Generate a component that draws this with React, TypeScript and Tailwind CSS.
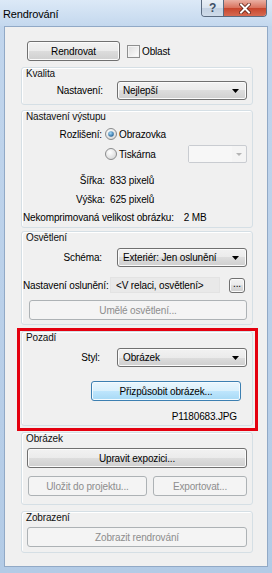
import React from "react";

const font = "font-['Liberation_Sans',Arial,sans-serif]";

function Btn({
  children,
  disabled,
  hot,
  className = "",
}: {
  children: React.ReactNode;
  disabled?: boolean;
  hot?: boolean;
  className?: string;
}) {
  const look = disabled
    ? "border-[#adb2b5] bg-[#f4f4f4] text-[#8d8d8d]"
    : hot
    ? "border-[#3c7fb1] bg-[linear-gradient(to_bottom,#eaf6fd_0%,#d9f0fc_50%,#bee6fd_50%,#a7d9f5_100%)] text-black shadow-[inset_0_0_0_1px_#f4fbff]"
    : "border-[#707070] bg-[linear-gradient(to_bottom,#f2f2f2_0%,#ebebeb_50%,#dddddd_50%,#cfcfcf_100%)] text-black shadow-[inset_0_0_0_1px_#fbfbfb]";
  return (
    <div
      className={`flex items-center justify-center rounded-[3px] border ${look} ${className}`}
    >
      {children}
    </div>
  );
}

function Combo({ text, className = "" }: { text: string; className?: string }) {
  return (
    <div
      className={`flex h-[19px] w-[130px] items-center rounded-[3px] border border-[#707070] bg-[linear-gradient(to_bottom,#f2f2f2_0%,#ebebeb_50%,#dddddd_50%,#cfcfcf_100%)] pl-[5px] pr-[7px] shadow-[inset_0_0_0_1px_#fbfbfb] ${className}`}
    >
      <span className="flex-1 whitespace-nowrap">{text}</span>
      <svg width="7" height="4" viewBox="0 0 7 4">
        <path d="M0 0H7L3.5 4Z" fill="#000" />
      </svg>
    </div>
  );
}

function Radio({ checked }: { checked?: boolean }) {
  return (
    <svg width="12" height="12" viewBox="0 0 12 12" className="shrink-0">
      <defs>
        <radialGradient id={checked ? "rbc" : "rbu"} cx="40%" cy="35%" r="70%">
          <stop offset="0" stopColor="#ffffff" />
          <stop offset="1" stopColor="#d6d6d6" />
        </radialGradient>
        <radialGradient id="rdot" cx="40%" cy="35%" r="70%">
          <stop offset="0" stopColor="#a6dcfb" />
          <stop offset="1" stopColor="#1b5a91" />
        </radialGradient>
      </defs>
      <circle
        cx="6"
        cy="6"
        r="5.5"
        fill={`url(#${checked ? "rbc" : "rbu"})`}
        stroke="#8a8b8c"
      />
      {checked && <circle cx="6" cy="6" r="2.8" fill="url(#rdot)" />}
    </svg>
  );
}

function Group({
  title,
  children,
  className = "",
}: {
  title: string;
  children: React.ReactNode;
  className?: string;
}) {
  return (
    <div
      className={`rounded-[3px] border border-[#d5dfe5] shadow-[inset_1px_1px_0_#ffffff] ${className}`}
    >
      <div className="pl-[4px] leading-[11px] text-[#111]">{title}</div>
      {children}
    </div>
  );
}

export default function App() {
  return (
    <div
      className={`flex h-[573px] w-[272px] flex-col bg-[linear-gradient(to_bottom,#c2d6ed,#b3cbe6)] text-[10px] tracking-[-0.15px] text-black ${font}`}
    >
      {/* Title bar */}
      <div className="flex h-[26px] shrink-0 items-start bg-[linear-gradient(to_bottom,#dce9f7,#c4d8ee)]">
        <div className="mt-[8px] pl-[3px] text-[11px] leading-[12px] text-black">
          Rendrování
        </div>
        <div className="flex-1" />
        <div className="flex h-[17px] overflow-hidden rounded-b-[4px] border border-t-0 border-[#5a6b80]">
          <div className="flex w-[22px] items-center justify-center border-r border-[#5a6b80] bg-[linear-gradient(to_bottom,#e9eff6_0%,#d9e3ee_50%,#c3d1e2_50%,#cfdbe9_100%)] text-[12px] font-bold leading-none text-[#3e4f66]">
            ?
          </div>
          <div className="flex w-[42px] items-center justify-center bg-[linear-gradient(to_bottom,#eab0a3_0%,#d8705b_50%,#c7442b_50%,#d66a52_100%)]">
            <svg width="12" height="11" viewBox="0 0 12 11">
              <path
                d="M2 1.5L10 9.5M10 1.5L2 9.5"
                stroke="#5a1d12"
                strokeWidth="3.6"
                strokeLinecap="square"
              />
              <path
                d="M2 1.5L10 9.5M10 1.5L2 9.5"
                stroke="#ffffff"
                strokeWidth="2"
                strokeLinecap="square"
              />
            </svg>
          </div>
        </div>
        <div className="w-[5px]" />
      </div>

      {/* Client area */}
      <div className="mx-[4px] mb-[6px] flex flex-1 flex-col border border-[#91a9c6] bg-[#f0f0f0] pl-[16px] pr-[14px]">
        {/* Render row */}
        <div className="mt-[14px] flex items-center pl-[6px]">
          <Btn className="h-[20px] w-[93px]">Rendrovat</Btn>
          <div className="ml-[7px] h-[13px] w-[13px] border border-[#8e8f8f] bg-[linear-gradient(135deg,#dcdcdc,#ffffff)] shadow-[inset_0_0_0_1px_#f4f4f4]" />
          <span className="ml-[2px]">Oblast</span>
        </div>

        {/* Kvalita */}
        <Group title="Kvalita" className="mt-[6px] pb-[4px]">
          <div className="mt-[2px] flex items-center">
            <div className="w-[81px] text-right">Nastavení:</div>
            <Combo text="Nejlepší" className="ml-[14px]" />
          </div>
        </Group>

        {/* Nastavení výstupu */}
        <Group title="Nastavení výstupu" className="mt-[5px] pb-[1px]">
          <div className="mt-[4px] flex h-[16px] items-center">
            <div className="w-[80px] text-right">Rozlišení:</div>
            <div className="ml-[3px] flex items-center">
              <Radio checked />
              <span className="ml-[2px]">Obrazovka</span>
            </div>
          </div>
          <div className="mt-[3px] flex h-[18px] items-center">
            <div className="ml-[83px] flex w-[83px] items-center">
              <Radio />
              <span className="ml-[2px]">Tiskárna</span>
            </div>
            <div className="flex h-[18px] w-[59px] items-center rounded-[2px] border border-[#c9ccd1] bg-[#f4f4f4]">
              <div className="h-full flex-1 bg-[#f7f7f7]" />
              <div className="flex h-full w-[14px] items-center justify-center">
                <svg width="6" height="3" viewBox="0 0 6 3">
                  <path d="M0 0H6L3 3Z" fill="#b4b4b4" />
                </svg>
              </div>
            </div>
          </div>
          <div className="mt-[8px] flex h-[19px] items-center">
            <div className="w-[83px] text-right">Šířka:</div>
            <div className="ml-[5px]">833 pixelů</div>
          </div>
          <div className="flex h-[19px] items-center">
            <div className="w-[83px] text-right">Výška:</div>
            <div className="ml-[5px]">625 pixelů</div>
          </div>
          <div className="flex h-[17px] items-center pl-[1px]">
            <span>Nekomprimovaná velikost obrázku:</span>
            <span className="ml-[10px]">2 MB</span>
          </div>
        </Group>

        {/* Osvětlení */}
        <Group title="Osvětlení" className="mt-[3px] pb-[4px]">
          <div className="mt-[5px] flex items-center">
            <div className="w-[80px] text-right">Schéma:</div>
            <Combo text="Exteriér: Jen oslunění" className="ml-[15px]" />
          </div>
          <div className="mt-[10px] flex h-[16px] items-center pl-[1px]">
            <div className="w-[87px] whitespace-nowrap">Nastavení oslunění:</div>
            <div className="flex h-[16px] w-[110px] items-center border border-[#e3e3e3] bg-[#e9e9e9] pl-[5px]">
              &lt;V relaci, osvětlení&gt;
            </div>
            <Btn className="ml-[9px] h-[15px] w-[16px] pb-[3px] leading-none">...</Btn>
          </div>
          <div className="mt-[7px] pl-[7px] pr-[5px]">
            <Btn disabled className="h-[20px]">
              Umělé osvětlení...
            </Btn>
          </div>
        </Group>

        {/* Pozadí (annotated) */}
        <div className="relative mt-[6px]">
          <Group title="Pozadí" className="pb-[2px]">
            <div className="mt-[5px] flex items-center">
              <div className="w-[78px] text-right">Styl:</div>
              <Combo text="Obrázek" className="ml-[17px]" />
            </div>
            <div className="mt-[14px] pl-[69px]">
              <Btn hot className="h-[20px] w-[150px]">
                Přizpůsobit obrázek...
              </Btn>
            </div>
            <div className="mt-[10px] h-[12px] pr-[15px] text-right leading-[12px]">
              P1180683.JPG
            </div>
          </Group>
          <div className="pointer-events-none absolute -bottom-[5px] -left-[4px] -right-[5px] -top-[3px] border-[3px] border-[#e4000f]" />
        </div>

        {/* Obrázek */}
        <Group title="Obrázek" className="mt-[6px] pb-[8px]">
          <div className="mt-[4px] pl-[5px] pr-[5px]">
            <Btn className="h-[20px]">Upravit expozici...</Btn>
          </div>
          <div className="mt-[8px] flex gap-[6px] pl-[6px] pr-[5px]">
            <Btn disabled className="h-[20px] w-[119px]">
              Uložit do projektu...
            </Btn>
            <Btn disabled className="h-[20px] flex-1">
              Exportovat...
            </Btn>
          </div>
        </Group>

        {/* Zobrazení */}
        <Group title="Zobrazení" className="mt-[6px] pb-[5px]">
          <div className="mt-[4px] pl-[5px] pr-[5px]">
            <Btn disabled className="h-[20px]">
              Zobrazit rendrování
            </Btn>
          </div>
        </Group>
      </div>
    </div>
  );
}
